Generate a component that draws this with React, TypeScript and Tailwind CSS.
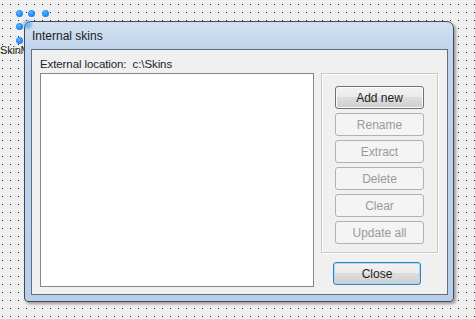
import React from "react";

const handles = [
  [19, 13],
  [31, 13],
  [45, 13],
  [19, 26],
  [19, 40],
];

const sideButtons = [
  { label: "Add new", enabled: true },
  { label: "Rename", enabled: false },
  { label: "Extract", enabled: false },
  { label: "Delete", enabled: false },
  { label: "Clear", enabled: false },
  { label: "Update all", enabled: false },
];

function Handle({ x, y }: { x: number; y: number }) {
  return (
    <div
      className="absolute w-[7px] h-[7px] rounded-full bg-[radial-gradient(circle_at_40%_35%,#5cb4ff,#1580f0_70%)]"
      style={{ left: x - 3.5, top: y - 3.5 }}
    />
  );
}

export default function App() {
  return (
    <div className="relative w-[475px] h-[319px] overflow-hidden bg-[#f0f0f0] font-['Liberation_Sans',Arial,sans-serif] text-[12px] text-[#1e1e1e]">
      {/* designer grid */}
      <svg className="absolute inset-0" width="475" height="319">
        <defs>
          <pattern id="dots" width="8" height="8" patternUnits="userSpaceOnUse">
            <rect x="2" y="4" width="1" height="1" fill="#1a1a1a" />
          </pattern>
        </defs>
        <rect width="475" height="319" fill="url(#dots)" />
      </svg>

      {/* selected widget hidden under the dialog */}
      <span className="absolute left-0 top-[42px] w-[25px] overflow-hidden whitespace-nowrap leading-[16px] text-[11px] tracking-[-0.2px]">
        SkinManager
      </span>
      {handles.map(([x, y]) => (
        <Handle key={`${x}-${y}`} x={x} y={y} />
      ))}

      {/* dialog */}
      <div className="relative pl-[24px] pt-[21px]">
        <div className="w-[430px] h-[281px] flex flex-col rounded-t-[7px] rounded-b-[4px] border border-[#3f4a58] bg-[linear-gradient(to_bottom,#d3e1f2_0px,#c2d5ed_27px,#b8cee9_100%)] pl-[6px] pr-[5px] pb-[6px] shadow-[2px_2px_3px_rgba(0,0,0,0.35)]">
          <div className="h-[27px] flex items-center pl-[1px] text-[#1b1b1b]">Internal skins</div>

          <div className="flex-1 flex border border-[#5f6d80] bg-[#f0f0f0] pl-[8px] pr-[9px]">
            {/* left: location + list */}
            <div className="w-[274px] flex flex-col">
              <div className="h-[23px] flex items-center pt-[7px] text-[11.5px] tracking-[-0.1px]">
                External location:&nbsp;&nbsp;c:\Skins
              </div>
              <div className="h-[214px] border border-[#828790] bg-white" />
            </div>

            {/* right: buttons */}
            <div className="ml-[7px] w-[117px] flex flex-col pt-[23px]">
              <div className="h-[180px] border border-[#c9c9c9] shadow-[inset_1px_1px_0_#ffffff,1px_1px_0_#ffffff] pt-[12px] pl-[13px] flex flex-col gap-[4px]">
                {sideButtons.map((b) => (
                  <div
                    key={b.label}
                    className={
                      b.enabled
                        ? "w-[89px] h-[23px] flex items-center justify-center rounded-[3px] border border-[#707070] bg-[linear-gradient(to_bottom,#f2f2f2_0%,#ebebeb_50%,#dddddd_50%,#cfcfcf_100%)] shadow-[inset_0_0_0_1px_#fbfbfb]"
                        : "w-[89px] h-[23px] flex items-center justify-center rounded-[3px] border border-[#adb2b5] bg-[#f4f4f4] text-[#9a9a9a]"
                    }
                  >
                    {b.label}
                  </div>
                ))}
              </div>
              <div className="mt-[9px] ml-[12px] w-[88px] h-[23px] flex items-center justify-center rounded-[3px] border border-[#3c7fb1] bg-[linear-gradient(to_bottom,#f2f2f2_0%,#ebebeb_50%,#dddddd_50%,#cfcfcf_100%)] shadow-[inset_0_0_0_1px_#9fdcfa]">
                Close
              </div>
            </div>
          </div>
        </div>
      </div>

      {/* handle glimpsed through the dialog corner */}
      <div className="absolute left-[23px] top-[20px] w-[9px] h-[9px] rounded-full bg-[#3a8ee8] opacity-50 blur-[1px]" />
    </div>
  );
}
